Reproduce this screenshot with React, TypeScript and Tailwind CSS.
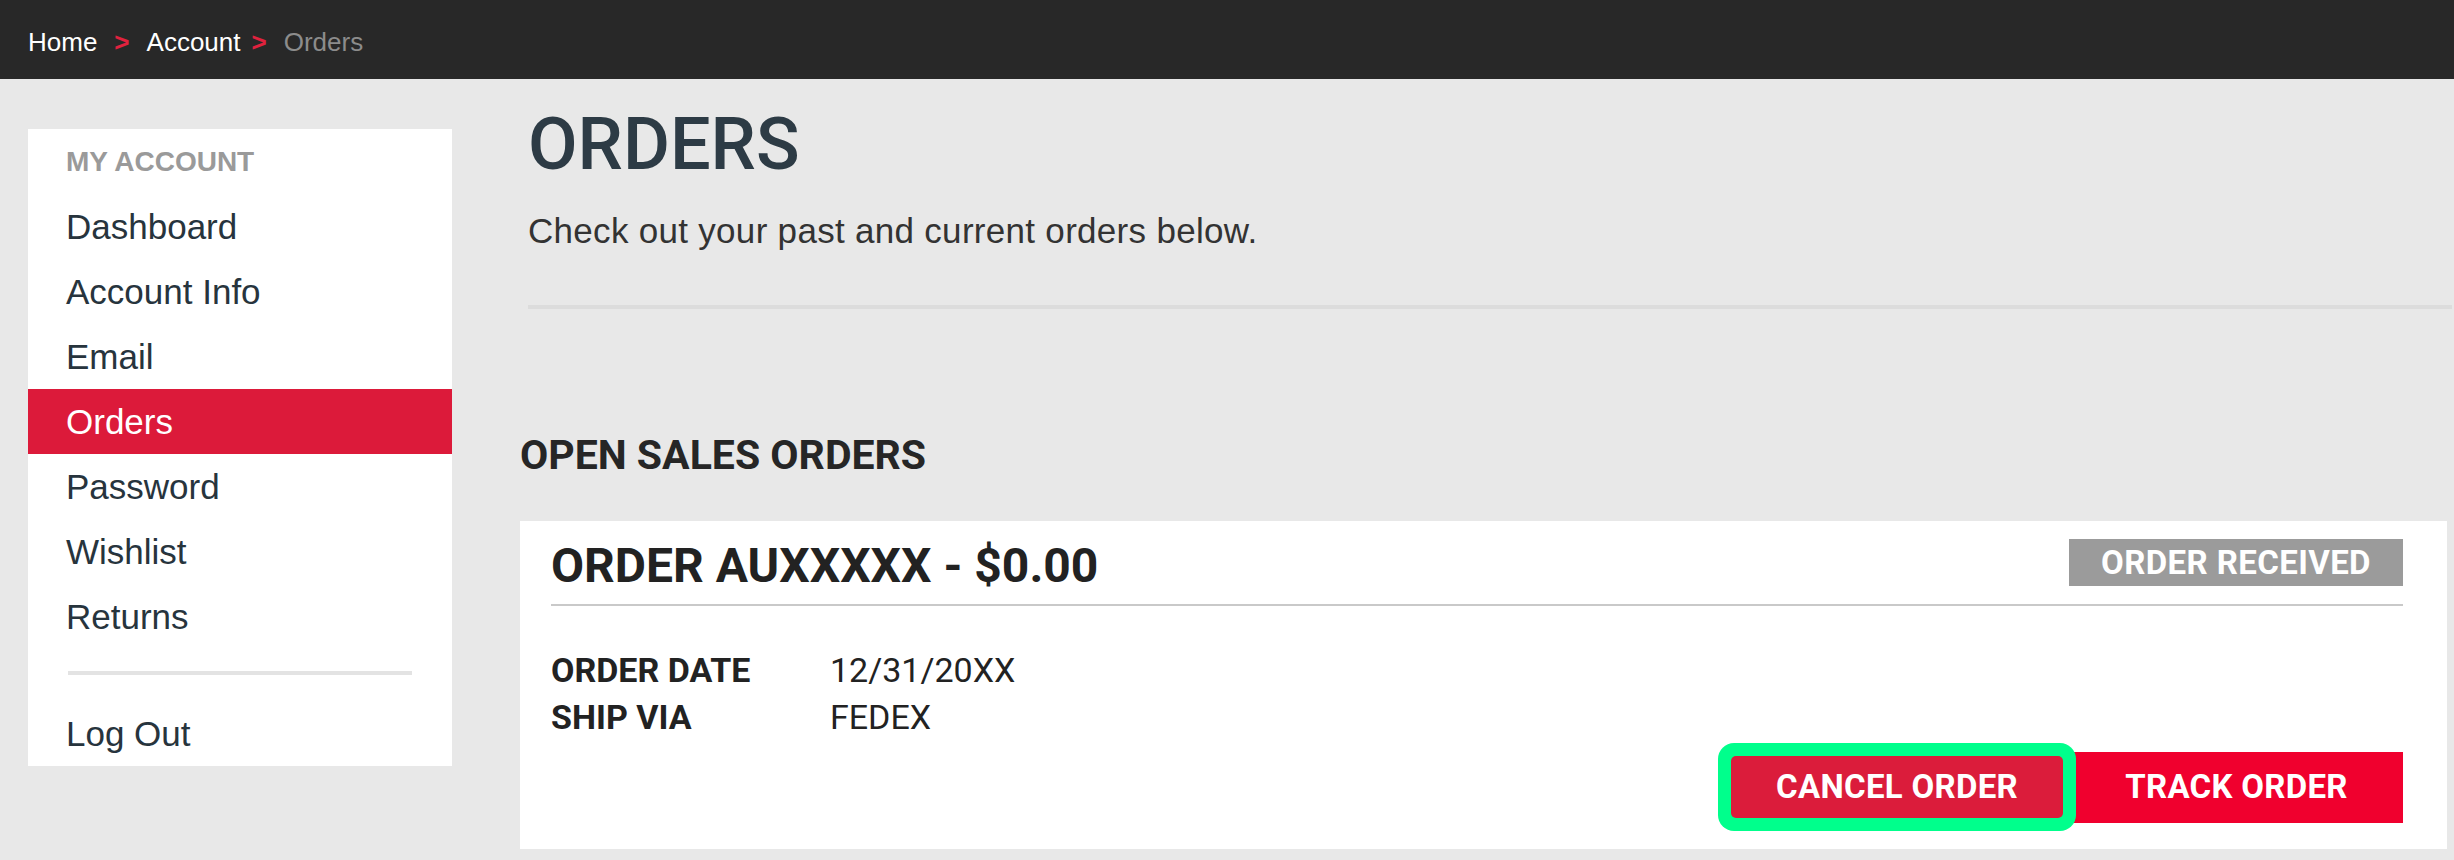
import React from 'react';

const NAV_ITEMS = ['Dashboard', 'Account Info', 'Email', 'Orders', 'Password', 'Wishlist', 'Returns'];

const Breadcrumb = () => (
  <nav className="h-[79px] bg-[#282828] flex items-center pl-[28px] pt-[5px] text-[26px] text-white">
    <span>Home</span>
    <span className="font-bold text-[#e0223e] mx-[17px]">&gt;</span>
    <span>Account</span>
    <span className="font-bold text-[#e0223e] ml-[11px] mr-[17px]">&gt;</span>
    <span className="text-[#8c8c8c]">Orders</span>
  </nav>
);

const Sidebar = ({ active }: { active: string }) => (
  <aside className="w-[424px] shrink-0 bg-white mt-[50px] ml-[28px]">
    <div className="h-[65px] leading-[65px] pl-[38px] text-[28px] font-bold text-[#9a9a9a]">MY ACCOUNT</div>
    {NAV_ITEMS.map((item) => (
      <div
        key={item}
        className={`h-[65px] leading-[65px] pl-[38px] text-[35px] cursor-pointer ${
          item === active ? 'bg-[#dc1a3a] text-white' : 'text-[#27343d]'
        }`}
      >
        {item}
      </div>
    ))}
    <div className="mt-[22px] mx-[40px] h-[4px] bg-[#e3e3e3]"></div>
    <div className="mt-[26px] h-[65px] leading-[65px] pl-[38px] text-[35px] text-[#27343d]">Log Out</div>
  </aside>
);

const OrderCard = () => (
  <div className="mt-[42px] mr-[5px] bg-white pl-[31px] pr-[44px] pt-[18px] pb-[18px] font-['Roboto',sans-serif] text-[#222]">
    {/* Header */}
    <div className="flex justify-between items-start pb-[14px] border-b-2 border-[#c9c9c9]">
      <h3 className="pt-[3px] text-[48px] leading-[48px] font-bold">ORDER AUXXXXX - $0.00</h3>
      <span className="w-[334px] h-[47px] flex items-center justify-center bg-[#9b9b9b] text-white text-[33px] tracking-[0.4px] font-bold">
        ORDER RECEIVED
      </span>
    </div>

    {/* Details */}
    <div className="mt-[41px] text-[34px] leading-[47px]">
      <div className="flex">
        <span className="w-[279px] font-bold">ORDER DATE</span>
        <span>12/31/20XX</span>
      </div>
      <div className="flex">
        <span className="w-[279px] font-bold">SHIP VIA</span>
        <span>FEDEX</span>
      </div>
    </div>

    {/* Actions */}
    <div className="mt-[2px] flex justify-end items-center">
      <div className="relative z-10 rounded-[16px] bg-[#00ff8c] p-[13px]">
        <button className="w-[332px] h-[62px] rounded-[5px] bg-[#db1c3b] text-white text-[33px] tracking-[0.3px] font-bold">
          CANCEL ORDER
        </button>
      </div>
      <button className="-ml-[6px] w-[333px] h-[71px] bg-[#f0002e] text-white text-[33px] tracking-[0.3px] font-bold">
        TRACK ORDER
      </button>
    </div>
  </div>
);

export default function App() {
  return (
    <div className="min-h-screen bg-[#e8e8e8] font-['Liberation_Sans',Arial,sans-serif]">
      <Breadcrumb />
      <div className="flex items-start">
        <Sidebar active="Orders" />
        <main className="flex-1 ml-[68px] pr-[2px]">
          <div className="pl-[8px]">
            <h1 className="mt-[30px] font-['Roboto',sans-serif] font-medium text-[72px] leading-[72px] text-[#2d3b45]">ORDERS</h1>
            <p className="mt-[30px] text-[35px] leading-[40px] tracking-[0.3px] text-[#333]">Check out your past and current orders below.</p>
          </div>
          <div className="mt-[54px] ml-[8px] h-[4px] bg-[#dcdcdc]"></div>

          <h2 className="mt-[122px] font-['Roboto',sans-serif] font-bold text-[41px] leading-[48px] text-[#262626]">
            OPEN SALES ORDERS
          </h2>

          <OrderCard />
        </main>
      </div>
    </div>
  );
}
